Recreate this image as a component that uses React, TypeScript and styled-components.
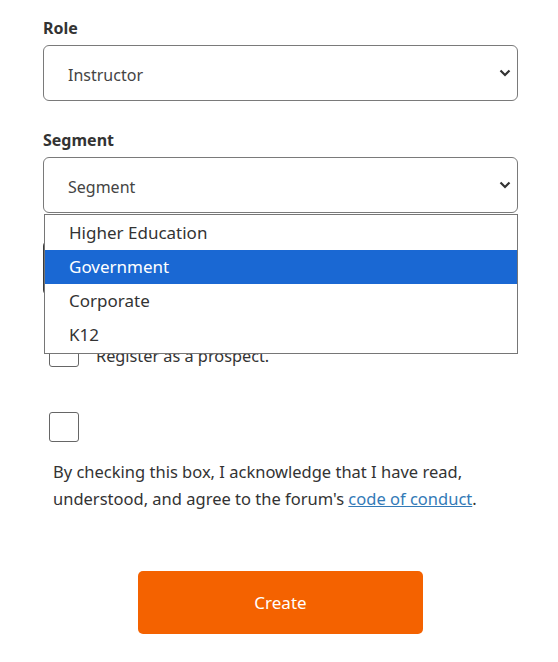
import React from "react";
import styled, { createGlobalStyle } from "styled-components";

const Global = createGlobalStyle`
  html, body { margin: 0; padding: 0; background: #fff; }
  body { font-family: "Noto Sans", "Open Sans", sans-serif; color: #333; }
`;

const Form = styled.div`
  position: relative;
  width: 475px;
  margin-left: 43px;
  padding-top: 16px;
  display: flex;
  flex-direction: column;
`;

const Field = styled.div<{ $gap?: number }>`
  display: flex;
  flex-direction: column;
  margin-top: ${(p) => p.$gap ?? 0}px;
`;

const Label = styled.label`
  font-size: 16px;
  font-weight: 700;
  line-height: 24px;
  color: #333;
  margin-bottom: 5px;
`;

const SelectBox = styled.div<{ $dark?: boolean }>`
  position: relative;
  height: 56px;
  box-sizing: border-box;
  border: 1px solid ${(p) => (p.$dark ? "#3a3a3a" : "#7a7a7a")};
  border-radius: 6px;
  display: flex;
  align-items: center;
  padding: 3px 0 0 24px;
  font-size: 16px;
  color: #444;
  background: #fff;
`;

const Chevron = styled.svg`
  position: absolute;
  right: 6px;
  top: 50%;
  margin-top: -4px;
`;

const Popup = styled.ul`
  position: absolute;
  left: 1px;
  right: 0;
  top: 214px;
  margin: 0;
  padding: 1px 0;
  list-style: none;
  border: 1px solid #767676;
  background: #fff;
  z-index: 2;
`;

const Option = styled.li<{ $active?: boolean }>`
  height: 34px;
  line-height: 34px;
  padding-left: 24px;
  font-size: 17px;
  color: ${(p) => (p.$active ? "#fff" : "#333")};
  background: ${(p) => (p.$active ? "#1a68d3" : "transparent")};
`;

const CheckRow = styled.div<{ $gap: number }>`
  display: flex;
  align-items: center;
  gap: 17px;
  margin-top: ${(p) => p.$gap}px;
  padding-left: 6px;
`;

const Box = styled.span`
  width: 30px;
  height: 30px;
  box-sizing: border-box;
  border: 1px solid #666;
  border-radius: 3px;
  background: #fff;
  flex: none;
`;

const CheckText = styled.span`
  font-size: 16.3px;
  color: #333;
  padding-top: 8px;
`;

const Terms = styled.p`
  margin: 16px 0 0 10px;
  font-size: 16.5px;
  line-height: 27px;
  color: #333;
`;

const Link = styled.a`
  color: #337ab7;
  text-decoration: underline;
`;

const Button = styled.button`
  align-self: center;
  margin-top: 59px;
  width: 285px;
  height: 63px;
  border: none;
  border-radius: 5px;
  background: #f46200;
  color: #fff;
  font-family: inherit;
  font-size: 17px;
`;

const Arrow = () => (
  <Chevron width="12" height="8" viewBox="0 0 12 8">
    <polyline points="1.5,1.5 6,6 10.5,1.5" fill="none" stroke="#333" strokeWidth="2.2" />
  </Chevron>
);

export default function App() {
  return (
    <>
      <Global />
      <Form>
        <Field>
          <Label>Role</Label>
          <SelectBox>
            Instructor
            <Arrow />
          </SelectBox>
        </Field>
        <Field $gap={27}>
          <Label>Segment</Label>
          <SelectBox>
            Segment
            <Arrow />
          </SelectBox>
        </Field>
        <Field $gap={27}>
          <SelectBox $dark />
        </Field>
        <Popup>
          <Option>Higher Education</Option>
          <Option $active>Government</Option>
          <Option>Corporate</Option>
          <Option>K12</Option>
        </Popup>
        <CheckRow $gap={41}>
          <Box />
          <CheckText>Register as a prospect.</CheckText>
        </CheckRow>
        <CheckRow $gap={45}>
          <Box />
        </CheckRow>
        <Terms>
          By checking this box, I acknowledge that I have read, understood, and agree to the forum's{" "}
          <Link href="#">code of conduct</Link>.
        </Terms>
        <Button>Create</Button>
      </Form>
    </>
  );
}
